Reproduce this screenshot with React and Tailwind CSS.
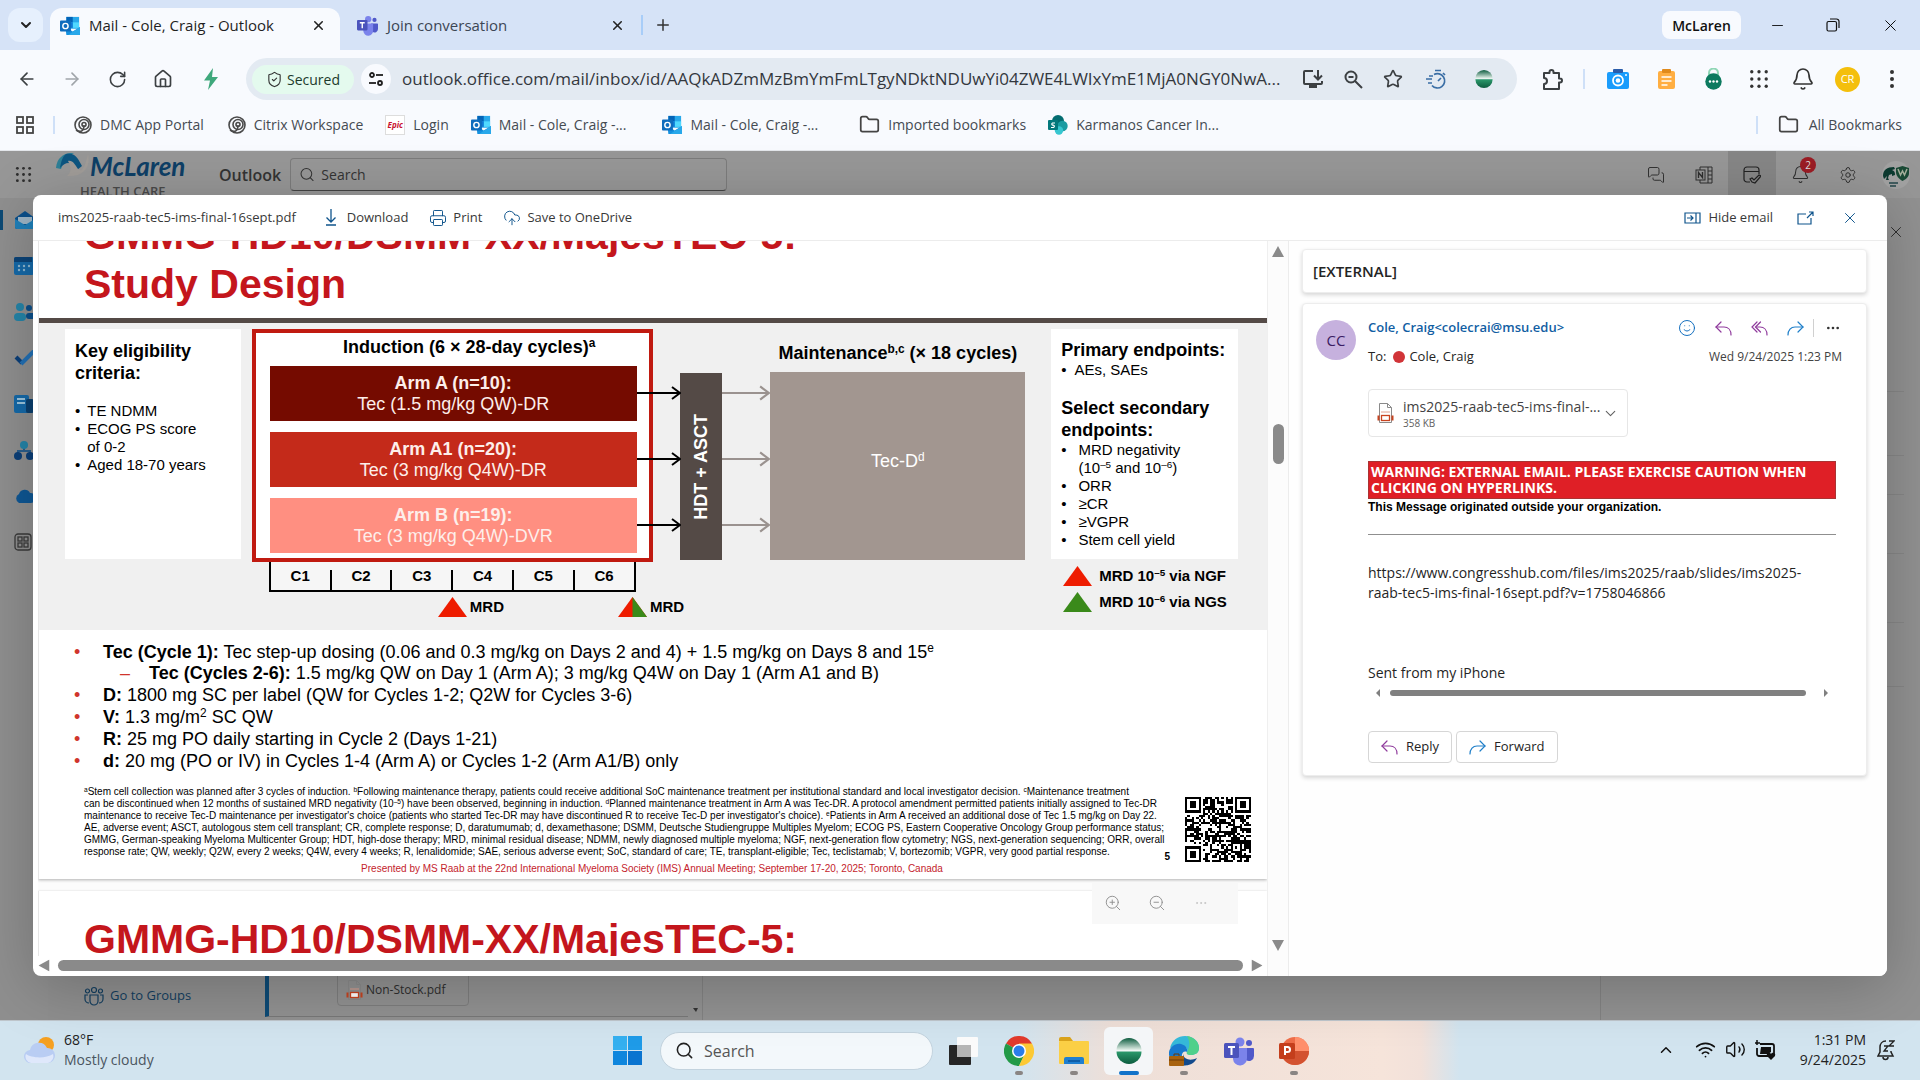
import React from 'react';
import {
  ArrowLeft, ArrowRight, RotateCw, House, ShieldCheck, Star, Bell, Settings, X, Plus, Minus,
  ChevronDown, ChevronUp, Search, ZoomIn, ZoomOut, Printer, CloudUpload, Folder, MessagesSquare,
  Smile, Ellipsis, Wifi, Volume2, EllipsisVertical,
} from 'lucide-react';

const IconButton = ({ label, className = '', children }) => (
  <button type="button" aria-label={label} className={`flex shrink-0 items-center justify-center ${className}`}>
    {children}
  </button>
);

/* ---------- small drawings ---------- */

const OutlookIcon = ({ size = 22 }) => (
  <svg width={size} height={size} viewBox="0 0 22 22">
    <rect x="7" y="1" width="14" height="13" fill="#28a8ea" />
    <rect x="7" y="1" width="7" height="6" fill="#0364b8" />
    <rect x="14" y="7" width="7" height="6" fill="#50d9ff" />
    <rect x="7" y="7" width="7" height="6" fill="#0f78d4" />
    <path d="M6 12l8 5 8-5v8a1 1 0 0 1-1 1H7z" fill="#1490df" />
    <path d="M22 12v8a1 1 0 0 1-1 1H9z" fill="#28a8ea" />
    <rect x="0" y="5" width="12" height="12" rx="1" fill="#0f6cbd" />
    <circle cx="6" cy="11" r="2.9" fill="none" stroke="#fff" strokeWidth="1.6" />
  </svg>
);

const TeamsIcon = ({ size = 22 }) => (
  <svg width={size} height={size} viewBox="0 0 30 28">
    <circle cx="25" cy="6" r="3" fill="#5059c9" />
    <path d="M20 11h9a1 1 0 0 1 1 1v7a5 5 0 0 1-8 4z" fill="#5059c9" />
    <circle cx="16" cy="5" r="4.5" fill="#7b83eb" />
    <path d="M9 11h14v10a7 7 0 0 1-14 1z" fill="#7b83eb" />
    <rect x="0" y="6" width="15" height="15" rx="1.5" fill="#4b53bc" />
    <path d="M4 10h7M7.500 10v8" stroke="#fff" strokeWidth="2" />
  </svg>
);

const GlobeIcon = ({ size = 18 }) => (
  <svg width={size} height={size} viewBox="0 0 26 26">
    <defs>
      <linearGradient id="globeTop" x1="0" y1="0" x2="0" y2="1">
        <stop offset="0" stopColor="#0d5c3f" />
        <stop offset="1" stopColor="#eef7f1" />
      </linearGradient>
      <linearGradient id="globeBottom" x1="0" y1="0" x2="0" y2="1">
        <stop offset="0" stopColor="#2c9a6c" />
        <stop offset="1" stopColor="#0d5c3f" />
      </linearGradient>
    </defs>
    <path d="M0.500 12.500a12.500 12.500 0 0 1 25 0z" fill="url(#globeTop)" />
    <path d="M0.500 13.500a12.500 12.500 0 0 0 25 0z" fill="url(#globeBottom)" />
  </svg>
);

const SwirlIcon = () => (
  <svg width="18" height="18" viewBox="0 0 18 18" fill="none" stroke="#4a4a4a" strokeWidth="1.600">
    <circle cx="9" cy="9" r="8" />
    <circle cx="10" cy="8.500" r="5" />
    <circle cx="10" cy="8.500" r="2" />
    <path d="M2 14c5 3 8 1 8-5" />
  </svg>
);

const SharepointIcon = () => (
  <svg width="20" height="20" viewBox="0 0 20 20">
    <circle cx="10" cy="6" r="6" fill="#036c70" />
    <circle cx="14.500" cy="11" r="5.200" fill="#1a9ba1" />
    <circle cx="11" cy="15.500" r="4.200" fill="#37c6d0" />
    <rect x="0" y="5" width="10" height="10" rx="1" fill="#03787c" />
    <path d="M7 8H4.500a1.200 1.200 0 0 0 0 2.200h1a1.200 1.200 0 0 1 0 2.300H3" stroke="#fff" fill="none" strokeWidth="1.200" />
  </svg>
);

const SlidersIcon = () => (
  <svg width="16" height="16" viewBox="0 0 16 16" fill="none" stroke="#1f1f1f" strokeWidth="1.800">
    <circle cx="4" cy="4" r="2" /><path d="M8 4h7" />
    <circle cx="12" cy="12" r="2" /><path d="M1 12h7" />
  </svg>
);

const DotGrid = ({ size = 18, color = '#333' }) => (
  <svg width={size} height={size} viewBox="0 0 18 18" fill={color}>
    {[2.5, 9, 15.5].map((x) => [2.5, 9, 15.5].map((y) => <circle key={`${x}-${y}`} cx={x} cy={y} r="1.500" />))}
  </svg>
);

const SquaresIcon = () => (
  <svg width="18" height="18" viewBox="0 0 18 18" fill="none" stroke="#444" strokeWidth="1.800">
    <rect x="1" y="1" width="6" height="6" /><rect x="11" y="1" width="6" height="6" />
    <rect x="1" y="11" width="6" height="6" /><rect x="11" y="11" width="6" height="6" />
  </svg>
);

const BoltIcon = () => (
  <svg width="16" height="22" viewBox="0 0 16 22" fill="#3fa87c"><path d="M10 0L1 12.500h6L5 22l10-13H9z" /></svg>
);

const InstallIcon = () => (
  <svg width="22" height="20" viewBox="0 0 22 20" fill="none" stroke="#3c4043" strokeWidth="2">
    <path d="M11 2H3a1 1 0 0 0-1 1v11a1 1 0 0 0 1 1h16a1 1 0 0 0 1-1v-2" />
    <path d="M16 1v9M12 6.500l4 4 4-4" />
    <path d="M7 17.500h8" strokeWidth="3" />
  </svg>
);

const PageZoomIcon = () => (
  <svg width="19" height="19" viewBox="0 0 19 19" fill="none" stroke="#3c4043" strokeWidth="2">
    <circle cx="7" cy="7" r="5.500" /><path d="M11 11l7 7M4.500 7h5" />
  </svg>
);

const PuzzleIcon = () => (
  <svg width="21" height="21" viewBox="0 0 21 21" fill="none" stroke="#3c4043" strokeWidth="2" strokeLinejoin="round">
    <path d="M2 4h5.500V3a2 2 0 0 1 4 0v1H17v5.500h1a2 2 0 0 1 0 4h-1V20H2v-5c4 0 4-6 0-6z" />
  </svg>
);

const StopwatchIcon = () => (
  <svg width="21" height="21" viewBox="0 0 21 21" fill="none" stroke="#3a6ea5" strokeWidth="1.700">
    <path d="M8 5.500a7.200 7.200 0 1 1-2 11" /><path d="M9 1.500h6M17 4l2 2" />
    <path d="M12 12l3-3M0 10h6M3 7h4M2 14h4" />
  </svg>
);

const CameraIcon = () => (
  <svg width="22" height="20" viewBox="0 0 22 20">
    <rect x="0" y="3" width="22" height="17" rx="2" fill="#1a9cfc" />
    <rect x="6" y="0" width="10" height="4" rx="1" fill="#2a5caa" />
    <circle cx="11" cy="11.500" r="5" fill="none" stroke="#fff" strokeWidth="1.800" />
    <circle cx="11" cy="11.500" r="2.300" fill="#fff" />
    <circle cx="19" cy="6" r="1" fill="#fff" />
  </svg>
);

const ClipboardIcon = () => (
  <svg width="17" height="20" viewBox="0 0 17 20">
    <rect x="0" y="2" width="17" height="18" rx="2" fill="#ffae42" />
    <rect x="4" y="0" width="9" height="4" rx="1" fill="#e08a1c" />
    <path d="M3.500 8h10M3.500 12h10M3.500 16h6" stroke="#fff" strokeWidth="1.500" />
  </svg>
);

const LockIcon = () => (
  <svg width="17" height="22" viewBox="0 0 17 22">
    <path d="M4 9V5a4.500 4.500 0 0 1 9 0v4" fill="none" stroke="#8fd6b5" strokeWidth="2" />
    <circle cx="8.500" cy="13.500" r="8.200" fill="#0c7a5f" />
    <g fill="#fff"><circle cx="5" cy="13.500" r="1.200" /><circle cx="8.500" cy="13.500" r="1.200" /><circle cx="12" cy="13.500" r="1.200" /></g>
  </svg>
);

const RestoreIcon = () => (
  <svg width="14" height="14" viewBox="0 0 14 14" fill="none" stroke="#111" strokeWidth="1.200">
    <rect x="1" y="3.500" width="9.500" height="9.500" rx="1.500" />
    <path d="M4 1h6.500A2.500 2.500 0 0 1 13 3.500V10" />
  </svg>
);

const PdfIcon = () => (
  <svg width="17" height="22" viewBox="0 0 17 22" fill="none" className="shrink-0">
    <path d="M2.500 20.500v-19h8l4 4v15z" stroke="#8a8a8a" />
    <path d="M10.500 1.500v4h4" stroke="#8a8a8a" />
    <path d="M4 10h9" stroke="#e0a090" />
    <rect x="4.500" y="13.500" width="8" height="5" stroke="#c8431f" strokeWidth="1.300" fill="#fff" />
    <path d="M1.500 13.500v5M15.500 13.500v5" stroke="#c8431f" strokeWidth="2" />
  </svg>
);

const ThinReply = ({ all = false }) => (
  <svg width="17" height="15" viewBox="0 0 17 15" fill="none" stroke="#8f3a9c" strokeWidth="1.200" strokeLinecap="round">
    <path d="M6 1L1 6l5 5" />
    {all && <path d="M9.500 1l-5 5 5 5" />}
    <path d={all ? 'M5 6h4c4 0 7 3 7 8' : 'M1 6h8c4 0 7 3 7 8'} />
  </svg>
);

const ThinForward = () => (
  <svg width="17" height="15" viewBox="0 0 17 15" fill="none" stroke="#1f7fc9" strokeWidth="1.200" strokeLinecap="round">
    <path d="M11 1l5 5-5 5" /><path d="M16 6H8c-4 0-7 3-7 8" />
  </svg>
);

const Triangle = ({ left = '#ee1c00', right = left }) => (
  <svg width="29" height="20" viewBox="0 0 29 20" className="shrink-0">
    <path d="M14.500 0L29 20H0z" fill={left} />
    {right !== left && <path d="M14.500 0L29 20H14.500z" fill={right} />}
  </svg>
);

const FlowArrow = ({ color, className = '' }) => (
  <svg height="16" viewBox="0 0 44 16" preserveAspectRatio="xMaxYMid slice" className={className} fill="none" stroke={color} strokeWidth="2">
    <path d="M-10 8h53M35 2l8 6-8 6" />
  </svg>
);

const ScrollArrow = ({ turn = '' }) => (
  <svg width="12" height="11" viewBox="0 0 12 11" className={turn}><path d="M6 0l6 11H0z" fill="#8a8a8a" /></svg>
);

/* ---------- browser chrome ---------- */

const Tab = ({ icon, title, active }) => (
  <div className={`flex h-[42px] items-center pb-[7px] pr-3 ${active ? 'w-[290px] rounded-t-xl bg-[#f8fafe] pl-[10px]' : 'w-[299px] pl-[17px]'}`}>
    {icon}
    <span className={`ml-[9px] flex-1 text-[15px] ${active ? 'text-[#1f1f1f]' : 'text-[#3c4654]'}`}>{title}</span>
    <IconButton label={`Close ${title}`} className="size-5"><X size={15} strokeWidth={2.5} color="#222" /></IconButton>
  </div>
);

const bookmarks = [
  { icon: <SwirlIcon />, title: 'DMC App Portal', gap: 'ml-[19px]' },
  { icon: <SwirlIcon />, title: 'Citrix Workspace', gap: 'ml-[24px]' },
  {
    icon: (
      <span className="flex h-5 w-5 items-center justify-center border border-[#ddd] bg-white text-[8px] font-bold italic text-[#c8102e]">Epic</span>
    ),
    title: 'Login',
    gap: 'ml-[22px]',
  },
  { icon: <OutlookIcon size={20} />, title: 'Mail - Cole, Craig -...', gap: 'ml-[22px]' },
  { icon: <OutlookIcon size={20} />, title: 'Mail - Cole, Craig -...', gap: 'ml-[36px]' },
  { icon: <Folder size={21} strokeWidth={2} color="#444" />, title: 'Imported bookmarks', gap: 'ml-[41px]' },
  { icon: <SharepointIcon />, title: 'Karmanos Cancer In...', gap: 'ml-[22px]' },
];

const Browser = () => (
  <header className="shrink-0 bg-[#f8fafe]">
    <div className="flex h-[50px] items-center bg-[#d6e3f7] pl-2 pr-5">
      <IconButton label="Search tabs" className="h-[34px] w-[35px] rounded-xl bg-[#e6f0fd]">
        <ChevronDown size={16} strokeWidth={3} color="#222" />
      </IconButton>
      <div className="ml-[7px] flex self-end">
        <Tab icon={<OutlookIcon size={20} />} title="Mail - Cole, Craig - Outlook" active />
        <Tab icon={<TeamsIcon size={21} />} title="Join conversation" />
      </div>
      <span className="ml-[2px] h-5 w-[2px] bg-[#a8cdf8]" />
      <IconButton label="New tab" className="ml-[11px]"><Plus size={18} strokeWidth={2} color="#333" /></IconButton>
      <div className="ml-auto flex items-center">
        <button type="button" className="h-[28px] w-[79px] rounded-lg bg-[#f8fafe] text-[14px] font-semibold text-[#111]">McLaren</button>
        <IconButton label="Minimize" className="ml-[28px]"><Minus size={17} strokeWidth={1.2} color="#000" /></IconButton>
        <IconButton label="Restore" className="ml-[40px]"><RestoreIcon /></IconButton>
        <IconButton label="Close window" className="ml-[41px]"><X size={19} strokeWidth={1.2} color="#000" /></IconButton>
      </div>
    </div>

    <div className="flex h-[58px] items-center pl-[17px] pr-4">
      <IconButton label="Back"><ArrowLeft size={20} color="#3c4043" /></IconButton>
      <IconButton label="Forward" className="ml-[25px]"><ArrowRight size={20} color="#a0a5aa" /></IconButton>
      <IconButton label="Reload" className="ml-[26px]"><RotateCw size={19} color="#3c4043" /></IconButton>
      <IconButton label="Home" className="ml-[26px]"><House size={20} color="#3c4043" /></IconButton>
      <span className="ml-[30px]"><BoltIcon /></span>
      <div className="ml-[27px] flex h-[42px] flex-1 items-center rounded-full bg-[#e3eaf2] pl-[6px] pr-[24px]">
        <button type="button" className="flex h-[29px] w-[102px] items-center justify-center gap-1 rounded-full bg-[#e4faee] text-[14px] text-[#1c3a2c]">
          <ShieldCheck size={17} strokeWidth={1.6} color="#333" />Secured
        </button>
        <IconButton label="Site information" className="ml-[7px] size-[30px] rounded-full bg-[#f8fafe]"><SlidersIcon /></IconButton>
        <input
          type="text"
          aria-label="Address"
          defaultValue="outlook.office.com/mail/inbox/id/AAQkADZmMzBmYmFmLTgyNDktNDUwYi04ZWE4LWIxYmE1MjA0NGY0NwA..."
          className="ml-[11px] min-w-0 flex-1 bg-transparent text-[17px] text-[#33383e] outline-none"
        />
        <div className="flex items-center gap-[20px]">
          <IconButton label="Install app"><InstallIcon /></IconButton>
          <IconButton label="Zoom"><PageZoomIcon /></IconButton>
          <IconButton label="Bookmark"><Star size={20} color="#3c4043" /></IconButton>
          <IconButton label="Timer" className="ml-[3px]"><StopwatchIcon /></IconButton>
          <IconButton label="Secure extension" className="ml-2"><GlobeIcon /></IconButton>
        </div>
      </div>
      <IconButton label="Extensions" className="ml-[25px]"><PuzzleIcon /></IconButton>
      <span className="ml-[20px] h-5 w-[2px] bg-[#cfe0f8]" />
      <IconButton label="Screenshot" className="ml-[22px]"><CameraIcon /></IconButton>
      <IconButton label="Clipboard" className="ml-[29px]"><ClipboardIcon /></IconButton>
      <IconButton label="Password manager" className="ml-[30px]"><LockIcon /></IconButton>
      <IconButton label="Apps" className="ml-[27px]"><DotGrid size={20} /></IconButton>
      <IconButton label="Notifications" className="ml-[22px]"><Bell size={24} strokeWidth={1.7} color="#333" /></IconButton>
      <IconButton label="Profile" className="ml-[20px] size-[25px] rounded-full bg-[#f4bf0c] text-[11px] text-white">CR</IconButton>
      <IconButton label="Menu" className="ml-[20px]"><EllipsisVertical size={24} color="#333" /></IconButton>
    </div>

    <nav aria-label="Bookmarks" className="flex h-[43px] items-center border-b border-[#e3e6ea] pb-[9px] pl-4 pr-[18px] text-[14px] text-[#454b52]">
      <IconButton label="Tab groups"><SquaresIcon /></IconButton>
      <span className="ml-[19px] h-[18px] w-[2px] bg-[#cfe0f8]" />
      {bookmarks.map((b, i) => (
        <a key={i} href="#" className={`flex items-center gap-[8px] whitespace-nowrap ${b.gap}`}>
          {b.icon}{b.title}
        </a>
      ))}
      <span className="ml-auto h-[18px] w-[2px] bg-[#cfe0f8]" />
      <button type="button" className="ml-[20px] flex items-center gap-[10px]">
        <Folder size={21} color="#444" />All Bookmarks
      </button>
    </nav>
  </header>
);

/* ---------- mail app behind the preview ---------- */

const railIcons = [
  <svg key="mail" width="22" height="20" viewBox="0 0 22 20"><path d="M1 8l10-7 10 7v9a2 2 0 0 1-2 2H3a2 2 0 0 1-2-2z" fill="#0b4f8a" /><path d="M4 7h14v7H4z" fill="#9db4c4" /><path d="M1 9l10 6 10-6v8a2 2 0 0 1-2 2H3a2 2 0 0 1-2-2z" fill="#1f7fb8" /></svg>,
  <svg key="cal" width="20" height="18" viewBox="0 0 20 18"><rect width="20" height="18" rx="2" fill="#1569a8" /><path d="M0 5V2a2 2 0 0 1 2-2h16v5z" fill="#0b4377" /><g fill="#8fb7cf"><circle cx="5" cy="9" r="1.200" /><circle cx="10" cy="9" r="1.200" /><circle cx="15" cy="9" r="1.200" /><circle cx="5" cy="13" r="1.200" /><circle cx="10" cy="13" r="1.200" /></g></svg>,
  <svg key="people" width="22" height="18" viewBox="0 0 22 18"><circle cx="6" cy="4" r="4" fill="#2484a8" /><circle cx="15" cy="5" r="3" fill="#0b4f8a" /><rect x="0" y="10" width="12" height="8" rx="4" fill="#2484a8" /><rect x="12" y="10" width="10" height="6" rx="3" fill="#0b4f8a" /></svg>,
  <svg key="todo" width="22" height="16" viewBox="0 0 22 16" fill="none" strokeWidth="4"><path d="M2 7l6 6" stroke="#0b3f78" /><path d="M7 14L20 1" stroke="#2270b4" /></svg>,
  <svg key="news" width="20" height="18" viewBox="0 0 20 18"><rect width="15" height="18" rx="2" fill="#1569a8" /><rect x="12" y="4" width="8" height="14" rx="2" fill="#0b3f6e" /><path d="M3 4h8M3 8h8" stroke="#9cc4dc" strokeWidth="2" /></svg>,
  <svg key="org" width="20" height="19" viewBox="0 0 20 19"><path d="M10 6v5M4 13v-3h12v3" stroke="#2a5e8c" strokeWidth="2" fill="none" /><circle cx="10" cy="4" r="4" fill="#2484a8" /><circle cx="4" cy="15" r="4" fill="#0b3f78" /><circle cx="16" cy="15" r="4" fill="#0b3f78" /></svg>,
  <svg key="cloud" width="22" height="14" viewBox="0 0 22 14"><path d="M5 14a5 5 0 0 1 0-9 6 6 0 0 1 11-1 5 5 0 0 1 1 10z" fill="#0f5794" /></svg>,
  <svg key="apps" width="18" height="18" viewBox="0 0 18 18" fill="none" stroke="#3a3a3a" strokeWidth="1.300"><rect x="1" y="1" width="16" height="16" rx="3" /><rect x="4" y="4" width="4" height="4" /><rect x="10" y="4" width="4" height="4" /><rect x="4" y="10" width="4" height="4" /><rect x="10" y="10" width="4" height="4" /></svg>,
];

const McLarenLogo = () => (
  <div className="w-[131px] self-start">
    <div className="flex h-[29px] items-center">
      <svg width="34" height="26" viewBox="0 0 34 26" className="shrink-0">
        <path d="M0 15C1 5 7 1 14 0h4c-7 3-10 8-13 16z" fill="#2e7f96" />
        <path d="M10 1c5-1 9 0 12 5l4 7-5 4C16 9 11 7 4 15 5 8 7 3 10 1z" fill="#0d5580" />
        <path d="M12 8c5-1 7 4 10 8 4 4 7-2 10-15 3 14-5 23-21 22 4-3 5-8 1-15z" fill="#a09c98" />
      </svg>
      <span className="text-[26px] font-bold italic leading-none text-[#0e3f66] font-['Lato',sans-serif]">McLaren</span>
    </div>
    <div className="mt-[3px] whitespace-nowrap pl-6 text-[13px] font-semibold leading-4 text-[#4a4a4a]">HEALTH CARE</div>
  </div>
);

const MailApp = () => (
  <div className="flex h-full flex-col overflow-hidden bg-[#979797]">
    <div className="flex h-[47px] shrink-0 items-center pl-[15px]">
      <IconButton label="App launcher"><DotGrid size={17} color="#2e2e2e" /></IconButton>
      <div className="ml-6 self-start"><McLarenLogo /></div>
      <span className="ml-[32px] text-[16px] font-semibold text-[#333]">Outlook</span>
      <label className="ml-[9px] flex h-[33px] w-[437px] items-center rounded-[4px] border border-[#7c7c7c] border-b-[#444] px-2">
        <Search size={17} strokeWidth={1.5} color="#333" />
        <input type="search" aria-label="Search mail" placeholder="Search" className="ml-[6px] w-full bg-transparent text-[14px] placeholder-[#333] outline-none" />
      </label>
      <div className="ml-auto flex h-full items-center text-[#2f2f2f]">
        <IconButton label="Chat" className="w-12"><MessagesSquare size={18} strokeWidth={1.3} /></IconButton>
        <IconButton label="OneNote" className="w-12">
          <svg width="18" height="18" viewBox="0 0 18 18" fill="none" stroke="#2f2f2f"><path d="M5 4V1h12v16H5v-3M13 1v16M13 5h4M13 9h4M13 13h4" /><rect x="1" y="4" width="9" height="10" /><path d="M3.500 12V6.500l4 5V6" strokeWidth="1.400" /></svg>
        </IconButton>
        <IconButton label="My Day" className="h-full w-12 bg-[#868686]">
          <svg width="18" height="18" viewBox="0 0 18 18" fill="none" stroke="#222" strokeWidth="1.200"><path d="M7 16H4a3 3 0 0 1-3-3V4a3 3 0 0 1 3-3h9a3 3 0 0 1 3 3v4M1 5.500h15" /><path d="M7 13l2 3 3 1 6-7-2-1-5 5-2-2z" /></svg>
        </IconButton>
        <IconButton label="2 notifications" className="relative w-12">
          <Bell size={19} strokeWidth={1.3} />
          <span className="absolute -top-2 left-6 flex size-4 items-center justify-center rounded-full bg-[#9b1c24] text-[10px] text-[#ddd]">2</span>
        </IconButton>
        <IconButton label="Settings" className="w-12"><Settings size={18} strokeWidth={1.3} /></IconButton>
        <IconButton label="Account" className="ml-[10px] mr-[10px]">
          <svg width="28" height="28" viewBox="0 0 28 28">
            <circle cx="14" cy="14" r="14" fill="#a2a2a2" />
            <path d="M1 15C1 9 5 6 12 6l1 2-3 1c3 1 3 3 3 5l-3 1v-2l-3 1-1 3 1 2H4l1-4-3 3z" fill="#0c3a30" />
            <path d="M14 7l6.500-2L27 7v5c0 4-3 6-6.500 8C17 18 14 15 14 11z" fill="#1a4a35" />
            <path d="M16 8l2.500 6 2-4 2 4L25 8" fill="none" stroke="#a5b09c" strokeWidth="1.500" />
            <path d="M7 22h9M8 25h6" stroke="#23454a" strokeWidth="1.500" />
          </svg>
        </IconButton>
      </div>
    </div>

    <div className="flex min-h-0 flex-1">
      <div className="flex w-12 shrink-0 flex-col gap-[26px] bg-[#8f8f8f] pt-[12px]">
        {railIcons.map((icon, i) => (
          <div key={i} className={`flex h-5 items-center pl-[11px] ${i === 0 ? 'border-l-[3px] border-[#0d4a75]' : 'ml-[3px]'}`}>{icon}</div>
        ))}
      </div>
      <div className="flex w-[217px] shrink-0 items-end bg-[#8e8e8e] pb-[14px] pl-9">
        <a href="#" className="flex items-center gap-[6px] text-[13px] text-[#123d5e]">
          <svg width="20" height="20" viewBox="0 0 20 20" fill="none" stroke="#123d5e" strokeWidth="1.200"><circle cx="10" cy="4" r="2.500" /><circle cx="3.500" cy="5" r="2" /><circle cx="16.500" cy="5" r="2" /><path d="M6 9h8v6a4 4 0 0 1-8 0zM4 9H1v4a4 4 0 0 0 4 4M16 9h3v4a4 4 0 0 1-4 4" /></svg>
          Go to Groups
        </a>
      </div>
      <div className="flex flex-1 items-end bg-[#919191]">
        <div className="mb-[3px] h-full w-[423px] border-b border-l-[4px] border-b-[#777] border-l-[#0d4a75] pl-[68px]">
          <div className="flex h-full items-end pb-[10px]">
            <a href="#" className="flex h-[40px] w-[132px] items-center gap-[3px] rounded-[4px] border border-[#7d7d7d] pl-[8px] pt-[8px] text-[12px] text-[#2d2d2d]">
              <PdfIcon />Non-Stock.pdf
            </a>
          </div>
        </div>
        <div className="flex h-full w-[15px] items-end justify-center border-r border-[#828282] pb-[8px]"><svg width="5" height="4"><path d="M0 0h5L3 4z" fill="#333" /></svg></div>
        <div className="h-full flex-1" />
        <div className="flex h-full w-[320px] justify-end border-l border-[#828282]">
          <div className="flex w-full flex-col">
            <IconButton label="Close pane" className="mr-[15px] mt-[25px] self-end"><X size={18} strokeWidth={1.2} color="#222" /></IconButton>
            {['h-[151px]', 'h-16', 'h-[39px]', 'h-[59px]', 'h-[69px]', 'h-16'].map((h, i) => (
              <div key={i} className={`mr-4 shrink-0 border-b border-[#868686] ${h}`} />
            ))}
          </div>
        </div>
      </div>
    </div>
  </div>
);

/* ---------- slide ---------- */

const SlideTitle = ({ children }) => (
  <h1 className="pl-[45px] text-[41px] font-bold leading-[49px] text-[#c4161c]">{children}</h1>
);

const Sup = ({ children }) => <sup className="text-[0.66em]">{children}</sup>;

const arms = [
  { name: 'Arm A (n=10):', dose: 'Tec (1.5 mg/kg QW)-DR', color: 'bg-[#750b00]' },
  { name: 'Arm A1 (n=20):', dose: 'Tec (3 mg/kg Q4W)-DR', color: 'bg-[#c42a1a]' },
  { name: 'Arm B (n=19):', dose: 'Tec (3 mg/kg Q4W)-DVR', color: 'bg-[#ff8f81]' },
];

const StudyDiagram = () => (
  <div className="grid grid-cols-[26fr_176fr_11fr_401fr_28fr_42fr_48fr_255fr_26fr_187fr_29fr] border-t-[5px] border-[#544a46] bg-[#f0f0f0] pt-[6px] pb-[13px] *:min-w-0">
    <div className="col-start-2 h-[230px] bg-white pl-[10px] pt-[11px]">
      <h2 className="text-[18px] font-bold leading-[22px]">Key eligibility<br />criteria:</h2>
      <ul className="mt-[18px] text-[15px] leading-[18px]">
        {['TE NDMM', 'ECOG PS score of 0-2', 'Aged 18-70 years'].map((t) => (
          <li key={t} className="flex gap-[7px] pr-[30px]"><span>•</span><span>{t}</span></li>
        ))}
      </ul>
    </div>

    <div className="col-start-4 h-[233px] border-4 border-[#c01a10] bg-white pl-[14px] pr-[12px] pt-1">
      <h2 className="whitespace-nowrap pl-8 text-center text-[18px] font-bold leading-[20px]">Induction (6 × 28-day cycles)<Sup>a</Sup></h2>
      <div className="mt-[9px] flex flex-col gap-[11px]">
        {arms.map((arm) => (
          <div key={arm.name} className={`relative h-[55px] pt-[7px] text-center text-[18px] leading-[21px] text-[#fdeeea] ${arm.color}`}>
            <div className="font-bold">{arm.name}</div>
            <div>{arm.dose}</div>
            <FlowArrow color="#000" className="absolute left-full top-[19px] w-[44px]" />
          </div>
        ))}
      </div>
    </div>

    <div className="col-start-6 mt-[44px] flex h-[187px] items-center justify-center bg-[#544a46]">
      <span className="rotate-180 text-[18px] font-bold text-white [writing-mode:vertical-rl]">HDT + ASCT</span>
    </div>

    <div className="col-start-7 flex flex-col gap-[50px] pt-[56px]">
      {arms.map((arm) => <FlowArrow key={arm.name} color="#9a928f" className="w-full" />)}
    </div>

    <div className="col-start-8 pt-[14px] text-center">
      <h2 className="whitespace-nowrap text-[18px] font-bold leading-[21px]">Maintenance<Sup>b,c</Sup> (× 18 cycles)</h2>
      <div className="mt-[8px] flex h-[188px] items-center justify-center bg-[#a29690] pb-[10px] text-[18px] text-white">
        <span>Tec-D<Sup>d</Sup></span>
      </div>
    </div>

    <div className="col-start-10 h-[230px] whitespace-nowrap bg-white pl-[10px] pt-[10px] text-[15px] leading-[18px]">
      <h2 className="text-[18px] font-bold leading-[22px]">Primary endpoints:</h2>
      <ul><li className="flex gap-[8px]"><span>•</span>AEs, SAEs</li></ul>
      <h2 className="mt-[18px] text-[18px] font-bold leading-[22px]">Select secondary<br />endpoints:</h2>
      <ul>
        <li className="flex gap-[12px]"><span>•</span><span>MRD negativity<br />(10<Sup>–5</Sup> and 10<Sup>–6</Sup>)</span></li>
        {['ORR', '≥CR', '≥VGPR', 'Stem cell yield'].map((t) => (
          <li key={t} className="flex gap-[12px]"><span>•</span>{t}</li>
        ))}
      </ul>
    </div>

    <div className="col-start-4 pl-[17px] pr-[17px] text-[15px] font-bold">
      <div className="flex h-[30px] items-end border-x-2 border-b-2 border-black bg-[#f6f6f6]">
        {['C1', 'C2', 'C3', 'C4', 'C5', 'C6'].map((c) => (
          <div key={c} className="flex h-5 flex-1 items-end justify-center border-r-2 border-black pb-[5px] leading-[18px] last:border-r-0">{c}</div>
        ))}
      </div>
      <div className="flex gap-[114px] whitespace-nowrap pl-[169px] pt-[5px] leading-5">
        <span className="flex items-center gap-[3px]"><Triangle />MRD</span>
        <span className="flex items-center gap-[3px]"><Triangle right="#3a8a1a" />MRD</span>
      </div>
    </div>

    <div className="col-start-10 flex flex-col gap-[6px] whitespace-nowrap pl-3 pt-[4px] text-[15px] font-bold leading-5">
      <span className="flex items-center gap-[7px]"><Triangle /><span>MRD 10<Sup>–5</Sup> via NGF</span></span>
      <span className="flex items-center gap-[7px]"><Triangle left="#3a8a1a" /><span>MRD 10<Sup>–6</Sup> via NGS</span></span>
    </div>
  </div>
);

const Dose = ({ label, children }) => (
  <li className="flex"><span className="w-[29px] text-[#d0342c]">•</span><span><b>{label}</b> {children}</span></li>
);

const QR_SIZE = 29;

const finderCell = (x, y, left, top) => {
  const ring = Math.max(Math.abs(x - left - 3), Math.abs(y - top - 3));
  if (ring > 4) return null;
  return ring === 3 || ring <= 1;
};

const qrCell = (x, y) => {
  const spots = [[0, 0], [QR_SIZE - 7, 0], [0, QR_SIZE - 7]];
  for (const [left, top] of spots) {
    const hit = finderCell(x, y, left, top);
    if (hit !== null) return hit;
  }
  const ring = Math.max(Math.abs(x - 22), Math.abs(y - 22));
  if (ring <= 2) return ring !== 1;
  if (x === 6 || y === 6) return (x + y) % 2 === 0;
  const n = Math.sin(x * 12.9898 + y * 78.233) * 43758.5453;
  return n - Math.floor(n) > 0.47;
};

const QrCode = () => (
  <svg width="66" height="65" viewBox="0 0 29 29" preserveAspectRatio="none" shapeRendering="crispEdges" role="img" aria-label="QR code">
    {Array.from({ length: QR_SIZE * QR_SIZE }, (_, i) => [i % QR_SIZE, Math.floor(i / QR_SIZE)])
      .filter(([x, y]) => qrCell(x, y))
      .map(([x, y]) => <rect key={`${x}-${y}`} x={x} y={y} width="1" height="1" />)}
  </svg>
);

const Slide = () => (
  <article className="-mt-[30px] h-[668px] shrink-0 border-l border-[#e6e6e6] bg-white font-['Liberation_Sans',Arial,sans-serif] text-black shadow-[0_1px_3px_rgba(0,0,0,0.3)]">
    <div className="pb-[9px]">
      <SlideTitle>GMMG-HD10/DSMM-XX/MajesTEC-5:<br />Study Design</SlideTitle>
    </div>
    <StudyDiagram />
    <ul className="flex flex-col gap-px pl-[35px] pt-[12px] text-[18px] leading-[21px]">
      <Dose label="Tec (Cycle 1):">
        Tec step-up dosing (0.06 and 0.3 mg/kg on Days 2 and 4) + 1.5 mg/kg on Days 8 and 15<Sup>e</Sup>
        <span className="flex">
          <span className="w-[29px] pl-[17px] text-[#d0342c]">–</span>
          <span className="pl-[17px]"><b>Tec (Cycles 2-6):</b> 1.5 mg/kg QW on Day 1 (Arm A); 3 mg/kg Q4W on Day 1 (Arm A1 and B)</span>
        </span>
      </Dose>
      <Dose label="D:">1800 mg SC per label (QW for Cycles 1-2; Q2W for Cycles 3-6)</Dose>
      <Dose label="V:">1.3 mg/m<Sup>2</Sup> SC QW</Dose>
      <Dose label="R:">25 mg PO daily starting in Cycle 2 (Days 1-21)</Dose>
      <Dose label="d:">20 mg (PO or IV) in Cycles 1-4 (Arm A) or Cycles 1-2 (Arm A1/B) only</Dose>
    </ul>
    <div className="mt-[14px] flex items-end pl-[45px] pr-4">
      <p className="whitespace-nowrap pb-[4px] text-[10px] leading-[12px]">
        <Sup>a</Sup>Stem cell collection was planned after 3 cycles of induction. <Sup>b</Sup>Following maintenance therapy, patients could receive additional SoC maintenance treatment per institutional standard and local investigator decision. <Sup>c</Sup>Maintenance treatment<br />
        can be discontinued when 12 months of sustained MRD negativity (10<Sup>–5</Sup>) have been observed, beginning in induction. <Sup>d</Sup>Planned maintenance treatment in Arm A was Tec-DR. A protocol amendment permitted patients initially assigned to Tec-DR<br />
        maintenance to receive Tec-D maintenance per investigator's choice (patients who started Tec-DR may have discontinued R to receive Tec-D per investigator's choice). <Sup>e</Sup>Patients in Arm A received an additional dose of Tec 1.5 mg/kg on Day 22.<br />
        AE, adverse event; ASCT, autologous stem cell transplant; CR, complete response; D, daratumumab; d, dexamethasone; DSMM, Deutsche Studiengruppe Multiples Myelom; ECOG PS, Eastern Cooperative Oncology Group performance status;<br />
        GMMG, German-speaking Myeloma Multicenter Group; HDT, high-dose therapy; MRD, minimal residual disease; NDMM, newly diagnosed multiple myeloma; NGF, next-generation flow cytometry; NGS, next-generation sequencing; ORR, overall<br />
        response rate; QW, weekly; Q2W, every 2 weeks; Q4W, every 4 weeks; R, lenalidomide; SAE, serious adverse event; SoC, standard of care; TE, transplant-eligible; Tec, teclistamab; V, bortezomib; VGPR, very good partial response.
      </p>
      <span className="ml-auto text-[10px] font-bold leading-[10px]">5</span>
      <span className="ml-[15px]"><QrCode /></span>
    </div>
    <p className="pr-[2px] text-center text-[10px] leading-[13px] text-[#c4232c]">
      Presented by MS Raab at the 22nd International Myeloma Society (IMS) Annual Meeting; September 17-20, 2025; Toronto, Canada
    </p>
  </article>
);

const PdfViewer = () => (
  <section aria-label="Attachment preview" className="flex min-w-0 flex-1 border-r border-[#ececec]">
    <div className="flex min-w-0 flex-1 flex-col pl-[5px]">
      <div className="relative flex min-h-0 flex-1 flex-col overflow-hidden bg-[#fcfcfc]">
        <Slide />
        <article className="mt-3 flex-1 border-l border-[#e6e6e6] bg-white pt-6 font-['Liberation_Sans',Arial,sans-serif] shadow-[0_0_2px_rgba(0,0,0,0.15)]">
          <SlideTitle>GMMG-HD10/DSMM-XX/MajesTEC-5:</SlideTitle>
        </article>
        <div className="absolute bottom-8 right-[29px] flex h-[42px] w-[146px] items-center gap-[26px] bg-[#f8f8f8] pl-[12px] text-[#8a8a8a]">
          <IconButton label="Zoom in"><ZoomIn size={18} strokeWidth={1.2} /></IconButton>
          <IconButton label="Zoom out"><ZoomOut size={18} strokeWidth={1.2} /></IconButton>
          <IconButton label="More" className="ml-[2px]"><Ellipsis size={14} strokeWidth={1.2} color="#bbb" /></IconButton>
        </div>
      </div>
      <div className="flex h-5 items-center gap-[8px] pb-[2px] pr-[4px]">
        <ScrollArrow turn="-rotate-90" />
        <div className="h-[11px] flex-1 rounded-full bg-[#8a8a8a]" />
        <ScrollArrow turn="rotate-90" />
      </div>
    </div>
    <div className="flex w-[21px] flex-col items-center border-l border-[#efefef] bg-[#fcfcfc] pb-[25px] pt-[5px]">
      <ScrollArrow />
      <div className="mt-[167px] h-10 w-[11px] rounded-full bg-[#8a8a8a]" />
      <ScrollArrow turn="mt-auto rotate-180" />
    </div>
  </section>
);

/* ---------- message pane ---------- */

const card = 'rounded-[4px] border border-[#ededed] bg-white shadow-[0_2px_4px_rgba(0,0,0,0.16)]';
const replyButton = 'flex h-8 items-center gap-[8px] rounded-[4px] border border-[#d6d6d6] px-3 text-[13px] text-[#242424]';

const MessagePane = () => (
  <section aria-label="Message" className="w-[598px] shrink-0 bg-[#fefefe] pl-[13px] pr-5 pt-2 text-[#242424]">
    <h2 className={`${card} flex h-[44px] items-center pl-[10px] text-[15px] font-semibold`}>[EXTERNAL]</h2>
    <div className={`${card} mt-[10px] flex h-[473px] pl-[13px]`}>
      <div className="mt-[16px] flex size-10 shrink-0 items-center justify-center rounded-full bg-[#c6b1de] text-[15px] text-[#3b1d63]">CC</div>
      <div className="ml-[12px] flex min-w-0 flex-1 flex-col pt-[9px]">
        <div className="flex h-[30px] items-center pr-[25px]">
          <a href="#" className="text-[13px] font-semibold text-[#115ea3]">Cole, Craig&lt;colecrai@msu.edu&gt;</a>
          <div className="ml-auto flex items-center gap-[19px]">
            <IconButton label="React"><Smile size={18} strokeWidth={1.3} color="#0f6cbd" /></IconButton>
            <IconButton label="Reply"><ThinReply /></IconButton>
            <IconButton label="Reply all"><ThinReply all /></IconButton>
            <IconButton label="Forward"><ThinForward /></IconButton>
          </div>
          <span className="ml-[9px] h-[18px] w-px bg-[#d0d0d0]" />
          <IconButton label="More actions" className="ml-[11px]"><Ellipsis size={16} color="#333" /></IconButton>
        </div>
        <div className="flex h-[28px] items-center pr-[24px] text-[13px]">
          To:<span className="ml-[7px] mr-[4px] size-3 rounded-full bg-[#d13438]" />Cole, Craig
          <time className="ml-auto text-[12px] text-[#424242]">Wed 9/24/2025 1:23 PM</time>
        </div>
        <button type="button" className="mt-[18px] flex h-[48px] w-[260px] shrink-0 items-center rounded-[4px] border border-[#e6e6e6] pl-[8px] pr-2 text-left">
          <PdfIcon />
          <span className="ml-[9px] pt-[2px]">
            <span className="block whitespace-nowrap text-[14px] leading-[18px] text-[#424242]">ims2025-raab-tec5-ims-final-...</span>
            <span className="block text-[10px] leading-[14px] text-[#616161]">358 KB</span>
          </span>
          <ChevronDown size={17} strokeWidth={1.5} color="#616161" className="ml-auto shrink-0" />
        </button>
        <div className="mr-[30px] mt-[24px] flex flex-col">
          <p className="border border-[#a33] bg-[#df1f26] px-[2px] py-[2px] text-[14px] font-bold leading-[16px] text-white">
            WARNING: EXTERNAL EMAIL. PLEASE EXERCISE CAUTION WHEN CLICKING ON HYPERLINKS.
          </p>
          <p className="font-['Liberation_Sans',Arial,sans-serif] text-[12px] font-bold leading-4 text-black">This Message originated outside your organization.</p>
          <hr className="mt-[19px] border-[#8f8f8f]" />
          <p className="mt-[28px] text-[14px] leading-5">https://www.congresshub.com/files/ims2025/raab/slides/ims2025-<br />raab-tec5-ims-final-16sept.pdf?v=1758046866</p>
          <p className="mt-[60px] text-[14px] leading-5">Sent from my iPhone</p>
        </div>
        <div className="mr-[30px] mt-[4px] flex h-3 items-center px-[8px]">
          <svg width="4" height="8"><path d="M4 0v8L0 4z" fill="#808080" /></svg>
          <div className="ml-[10px] mr-[18px] h-[6px] flex-1 rounded-full bg-[#808080]" />
          <svg width="4" height="8"><path d="M0 0v8l4-4z" fill="#808080" /></svg>
        </div>
        <div className="mt-[32px] flex gap-[4px]">
          <button type="button" className={replyButton}><ThinReply />Reply</button>
          <button type="button" className={replyButton}><ThinForward />Forward</button>
        </div>
      </div>
    </div>
  </section>
);

const Preview = () => (
  <div role="dialog" aria-label="ims2025-raab-tec5-ims-final-16sept.pdf" className="absolute inset-x-[33px] inset-y-11 flex flex-col overflow-hidden rounded-lg bg-white shadow-[0_10px_60px_rgba(0,0,0,0.22)]">
    <div className="flex h-[46px] shrink-0 items-center border-b border-[#ececec] pl-[25px] pr-[28px] text-[13px] text-[#383838]">
      <span>ims2025-raab-tec5-ims-final-16sept.pdf</span>
      <button type="button" className="ml-[28px] flex items-center gap-[9px]">
        <svg width="14" height="17" viewBox="0 0 14 17" fill="none" stroke="#0f548c" strokeWidth="1.300"><path d="M7 0v13M2.500 8.500L7 13l4.500-4.500M2 16h10" /></svg>
        Download
      </button>
      <button type="button" className="ml-[21px] flex items-center gap-[6px]"><Printer size={18} strokeWidth={1.3} color="#0f548c" />Print</button>
      <button type="button" className="ml-[21px] flex items-center gap-[6px]"><CloudUpload size={18} strokeWidth={1.3} color="#0f548c" />Save to OneDrive</button>
      <button type="button" className="ml-auto flex items-center gap-[7px]">
        <svg width="17" height="12" viewBox="0 0 17 12" fill="none" stroke="#0f548c" strokeWidth="1.200"><path d="M1 1h15v10H1zM12 1v10M3 6h6M6.500 3.500L9 6 6.500 8.500" /></svg>
        Hide email
      </button>
      <IconButton label="Open in new window" className="ml-[24px]">
        <svg width="17" height="14" viewBox="0 0 17 14" fill="none" stroke="#0f548c" strokeWidth="1.200"><path d="M9 3H1v10h13V7M10 7l6-6M12 1h4v4" /></svg>
      </IconButton>
      <IconButton label="Close preview" className="ml-[27px]"><X size={18} strokeWidth={1.3} color="#0f548c" /></IconButton>
    </div>
    <div className="flex min-h-0 flex-1">
      <PdfViewer />
      <MessagePane />
    </div>
  </div>
);

/* ---------- taskbar ---------- */

const taskbarApps = [
  { label: 'Task view', icon: <svg width="29" height="28" viewBox="0 0 29 28"><rect x="0" y="8" width="22" height="20" rx="1" fill="#262626" /><rect x="8" y="0" width="21" height="20" rx="1" fill="#fafafa" /><rect x="8" y="8" width="14" height="12" fill="#b5b5b5" /></svg> },
  {
    label: 'Chrome',
    open: true,
    icon: (
      <svg width="30" height="30" viewBox="0 0 30 30">
        <path d="M15 15L2 7.500a15 15 0 0 1 26 0z" fill="#e0392b" />
        <path d="M15 15L2 7.500a15 15 0 0 0 13 22.500l5-10z" fill="#229a48" />
        <path d="M15 15h7L15 30A15 15 0 0 0 28 7.500H15z" fill="#fcc934" />
        <circle cx="15" cy="15" r="7" fill="#fff" /><circle cx="15" cy="15" r="5.500" fill="#2a7de9" />
      </svg>
    ),
  },
  { label: 'File Explorer', open: true, icon: <svg width="30" height="27" viewBox="0 0 30 27"><path d="M0 2a2 2 0 0 1 2-2h9l3 4H0z" fill="#d9a21b" /><rect x="0" y="4" width="30" height="23" rx="1" fill="#fbcf45" /><path d="M5 27v-5a2 2 0 0 1 2-2h16a2 2 0 0 1 2 2v5z" fill="#1f7fd0" /><path d="M9 24h12" stroke="#0f5ea8" strokeWidth="2" /></svg> },
  { label: 'Secure browser', active: true, icon: <GlobeIcon size={26} /> },
  {
    label: 'Edge',
    open: true,
    icon: (
      <svg width="30" height="30" viewBox="0 0 30 30">
        <path d="M1 12C3 4 9 0 16 0c8 0 14 5 14 12 0 5-4 7-8 7-3 0-5-1-4-3 1-3-1-6-5-6-5 0-9 0-12 2z" fill="#35b8d8" />
        <path d="M18 0c7 1 12 6 12 12 0 5-4 7-8 7-3 0-5-1-4-3 3-5 3-11 0-16z" fill="#4fd08a" />
        <path d="M0 16c1-5 6-9 12-8 4 1 7 4 6 8-4-2-7 3-4 9l4 4C8 32-1 25 0 16z" fill="#1779cf" />
        <path d="M14 18c1 6 8 7 14 4-3 6-8 8-14 7z" fill="#124a8c" />
        <rect x="0" y="20" width="15" height="10" rx="1" fill="#a8620f" /><path d="M5 20v-2h5v2M0 24h15" stroke="#6d3a06" fill="none" />
      </svg>
    ),
  },
  { label: 'Teams', icon: <TeamsIcon size={30} /> },
  {
    label: 'PowerPoint',
    open: true,
    icon: (
      <svg width="30" height="28" viewBox="0 0 30 28">
        <circle cx="16" cy="14" r="14" fill="#ed6c47" /><path d="M16 0a14 14 0 0 1 14 14H16z" fill="#ff8f6b" /><path d="M30 14a14 14 0 0 1-28 0z" fill="#d35230" />
        <rect x="0" y="6" width="16" height="16" rx="1.500" fill="#c43e1c" /><path d="M6 18v-8h2.500a2.500 2.500 0 0 1 0 5H6" fill="none" stroke="#fff" strokeWidth="2" />
      </svg>
    ),
  },
];

const Taskbar = () => (
  <footer className="grid h-[60px] shrink-0 grid-cols-[1fr_auto_1fr] items-center border-t border-[#bfc6cc] bg-[linear-gradient(90deg,#d2e4ef_0%,#d2e4ef_53%,#eedfd8_58%,#f6e4da_72%,#f2e1da_74%,#d2e4ef_76%)] text-[14px] leading-5 text-[#222]">
    <button type="button" className="flex items-center gap-[9px] pb-[2px] pl-6 text-left">
      <svg width="31" height="28" viewBox="0 0 31 28">
        <circle cx="22" cy="9" r="8" fill="#f6a021" />
        <path d="M7 27a6.500 6.500 0 0 1-1-13 9 9 0 0 1 17-2 7.500 7.500 0 0 1 1 15z" fill="#b9cdf3" />
        <path d="M7 27a6.500 6.500 0 0 1-5-9c5 4 20 5 27 0a7 7 0 0 1-5 9z" fill="#dfe8fb" />
      </svg>
      <span>68°F<span className="block text-[#4a5560]">Mostly cloudy</span></span>
    </button>
    <div className="flex items-center pl-[14px]">
      <IconButton label="Start">
        <svg width="29" height="29" viewBox="0 0 29 29" fill="#0f86dd"><path d="M0 0h14v14H0z" fill="#35b0f0" /><path d="M15 0h14v14H15z" fill="#1f9be8" /><path d="M0 15h14v14H0z" /><path d="M15 15h14v14H15z" fill="#0a74d0" /></svg>
      </IconButton>
      <label className="ml-[18px] flex h-[38px] w-[273px] items-center rounded-full border border-[#c3d3de] bg-[#f3f8fb] pl-[14px]">
        <Search size={19} strokeWidth={2} color="#222" />
        <input type="search" aria-label="Search Windows" placeholder="Search" className="ml-[10px] w-40 bg-transparent text-[16px] placeholder-[#555] outline-none" />
      </label>
      <div className="ml-[3px] flex">
        {taskbarApps.map((app) => (
          <button
            key={app.label}
            type="button"
            aria-label={app.label}
            className={`relative mx-[3px] flex h-12 w-[49px] items-center justify-center rounded-md ${app.active ? 'bg-[#f4f6f8]' : ''}`}
          >
            {app.icon}
            {app.open && <span className="absolute bottom-0 h-1 w-2 rounded-full bg-[#8a8583]" />}
            {app.active && <span className="absolute bottom-0 h-1 w-5 rounded-full bg-[#1273c9]" />}
          </button>
        ))}
      </div>
    </div>
    <div className="flex items-center justify-end pb-[2px] pr-[25px]">
      <IconButton label="Hidden icons" className="mr-[20px]"><ChevronUp size={18} color="#111" /></IconButton>
      <button type="button" aria-label="Network, sound and battery" className="mr-[24px] flex items-center gap-[9px]">
        <Wifi size={21} color="#111" />
        <Volume2 size={21} strokeWidth={1.6} color="#111" />
        <svg width="21" height="20" viewBox="0 0 21 20"><path d="M5 4h12a2 2 0 0 1 2 2v8a2 2 0 0 1-2 2H4a2 2 0 0 1-2-2V8" fill="none" stroke="#111" strokeWidth="1.800" /><path d="M6 7h10v5l-3 2H5z" fill="#111" /><path d="M2 0v5M0 3h5" stroke="#111" strokeWidth="1.500" /><path d="M16 20l-4-4a2 2 0 0 1 4-2 2 2 0 0 1 4 2z" fill="#111" /></svg>
      </button>
      <time className="mr-[11px] text-right">1:31 PM<span className="block">9/24/2025</span></time>
      <IconButton label="Do not disturb">
        <svg width="18" height="22" viewBox="0 0 18 22" fill="none" stroke="#222" strokeWidth="1.500"><path d="M9 2C5 2 3 5 3 8v5l-2 4h15l-2-4v-1M6 18a2.500 2.500 0 0 0 5 0" /><path d="M12 2h5l-5 5h5M7 7h4l-4 5h4" strokeWidth="1.300" /></svg>
      </IconButton>
    </div>
  </footer>
);

export default function App() {
  return (
    <div className="flex h-screen flex-col overflow-hidden font-['Open_Sans',sans-serif]">
      <Browser />
      <main className="relative min-h-0 flex-1">
        <MailApp />
        <Preview />
      </main>
      <Taskbar />
    </div>
  );
}
